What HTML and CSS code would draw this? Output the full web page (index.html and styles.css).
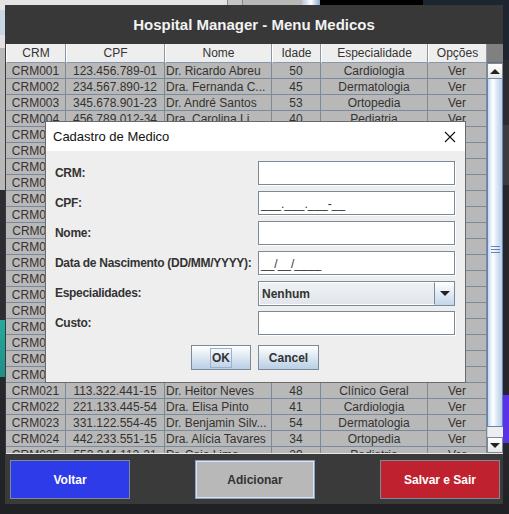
FILE: index.html
```html
<!DOCTYPE html>
<html>
<head>
<meta charset="utf-8">
<link rel="stylesheet" href="styles.css">
</head>
<body>
<div class="top-strip"><span class="ts a"></span><span class="ts b"></span><span class="ts c"></span><span class="ts d"></span><span class="ts e"></span><span class="ts f"></span></div>
<div class="left-strip"></div>
<div class="window">
  <div class="titlebar">Hospital Manager - Menu Medicos</div>
  <div class="scrollpane">
    <div class="viewport">
      <div class="grid head">
        <div class="hc">CRM</div><div class="hc">CPF</div><div class="hc">Nome</div><div class="hc">Idade</div><div class="hc">Especialidade</div><div class="hc">Opções</div>
      </div>
      <div class="grid body-rows">
        <div>CRM001</div><div>123.456.789-01</div><div class="l">Dr. Ricardo Abreu</div><div>50</div><div>Cardiologia</div><div>Ver</div>
        <div>CRM002</div><div>234.567.890-12</div><div class="l">Dra. Fernanda C...</div><div>45</div><div>Dermatologia</div><div>Ver</div>
        <div>CRM003</div><div>345.678.901-23</div><div class="l">Dr. André Santos</div><div>53</div><div>Ortopedia</div><div>Ver</div>
        <div>CRM004</div><div>456.789.012-34</div><div class="l">Dra. Carolina Li...</div><div>40</div><div>Pediatria</div><div>Ver</div>
        <div>CRM005</div><div>567.890.123-45</div><div class="l">Dr. Marcos Lima</div><div>47</div><div>Clínico Geral</div><div>Ver</div>
        <div>CRM006</div><div>678.901.234-56</div><div class="l">Dra. Juliana Rocha</div><div>39</div><div>Cardiologia</div><div>Ver</div>
        <div>CRM007</div><div>789.012.345-67</div><div class="l">Dr. Paulo Mendes</div><div>58</div><div>Dermatologia</div><div>Ver</div>
        <div>CRM008</div><div>890.123.456-78</div><div class="l">Dra. Beatriz Alves</div><div>36</div><div>Ortopedia</div><div>Ver</div>
        <div>CRM009</div><div>901.234.567-89</div><div class="l">Dr. Lucas Ferreira</div><div>44</div><div>Pediatria</div><div>Ver</div>
        <div>CRM010</div><div>012.345.678-90</div><div class="l">Dra. Camila Souza</div><div>42</div><div>Clínico Geral</div><div>Ver</div>
        <div>CRM011</div><div>111.222.333-44</div><div class="l">Dr. Rafael Costa</div><div>51</div><div>Cardiologia</div><div>Ver</div>
        <div>CRM012</div><div>222.333.444-55</div><div class="l">Dra. Larissa Melo</div><div>37</div><div>Dermatologia</div><div>Ver</div>
        <div>CRM013</div><div>333.444.555-66</div><div class="l">Dr. Gustavo Reis</div><div>49</div><div>Ortopedia</div><div>Ver</div>
        <div>CRM014</div><div>444.555.666-77</div><div class="l">Dra. Patrícia Dias</div><div>46</div><div>Pediatria</div><div>Ver</div>
        <div>CRM015</div><div>555.666.777-88</div><div class="l">Dr. Felipe Gomes</div><div>55</div><div>Clínico Geral</div><div>Ver</div>
        <div>CRM016</div><div>666.777.888-99</div><div class="l">Dra. Renata Lopes</div><div>38</div><div>Cardiologia</div><div>Ver</div>
        <div>CRM017</div><div>777.888.999-00</div><div class="l">Dr. Thiago Ramos</div><div>43</div><div>Dermatologia</div><div>Ver</div>
        <div>CRM018</div><div>888.999.000-11</div><div class="l">Dra. Vanessa Cruz</div><div>35</div><div>Ortopedia</div><div>Ver</div>
        <div>CRM019</div><div>999.000.111-22</div><div class="l">Dr. Bruno Teixeira</div><div>52</div><div>Pediatria</div><div>Ver</div>
        <div>CRM020</div><div>000.111.222-33</div><div class="l">Dra. Sofia Martins</div><div>33</div><div>Clínico Geral</div><div>Ver</div>
        <div>CRM021</div><div>113.322.441-15</div><div class="l">Dr. Heitor Neves</div><div>48</div><div>Clínico Geral</div><div>Ver</div>
        <div>CRM022</div><div>221.133.445-54</div><div class="l">Dra. Elisa Pinto</div><div>41</div><div>Cardiologia</div><div>Ver</div>
        <div>CRM023</div><div>331.122.554-45</div><div class="l">Dr. Benjamin Silv...</div><div>54</div><div>Dermatologia</div><div>Ver</div>
        <div>CRM024</div><div>442.233.551-15</div><div class="l">Dra. Alícia Tavares</div><div>34</div><div>Ortopedia</div><div>Ver</div>
        <div>CRM025</div><div>553.344.112-21</div><div class="l">Dr. Caio Lima</div><div>29</div><div>Pediatria</div><div>Ver</div>
      </div>
    </div>
    <div class="vscroll">
      <div class="corner"></div>
      <div class="sbtn"><span class="tri up"></span></div>
      <div class="thumb"><span class="grip"></span></div>
      <div class="track"></div>
      <div class="sbtn"><span class="tri down"></span></div>
    </div>
  </div>
  <div class="bottom-bar">
    <button class="big blue">Voltar</button>
    <button class="big gray">Adicionar</button>
    <button class="big red">Salvar e Sair</button>
  </div>

  <div class="dialog">
    <div class="dlg-title">
      <span>Cadastro de Medico</span>
      <svg class="close" width="12" height="12" viewBox="0 0 12 12"><path d="M1 1 L11 11 M11 1 L1 11" stroke="#111" stroke-width="1.1" fill="none"/></svg>
    </div>
    <div class="dlg-body">
      <div class="frow"><span class="lbl">CRM:</span><div class="field"></div></div>
      <div class="frow"><span class="lbl">CPF:</span><div class="field">___.___.___-__</div></div>
      <div class="frow"><span class="lbl">Nome:</span><div class="field"></div></div>
      <div class="frow"><span class="lbl">Data de Nascimento (DD/MM/YYYY):</span><div class="field">__/__/____</div></div>
      <div class="frow"><span class="lbl">Especialidades:</span><div class="combo"><span class="combo-val">Nenhum</span><span class="combo-btn"><span class="tri down"></span></span></div></div>
      <div class="frow"><span class="lbl">Custo:</span><div class="field"></div></div>
      <div class="btn-row">
        <button class="mbtn ok"><span class="focus">OK</span></button>
        <button class="mbtn cancel">Cancel</button>
      </div>
    </div>
  </div>
</div>
<div class="right-strip"></div>
</body>
</html>
```
FILE: styles.css
```css
html, body { margin: 0; padding: 0; }
body {
  width: 509px;
  height: 514px;
  overflow: hidden;
  background: #1f2125;
  display: grid;
  grid-template-columns: 5px 498px 6px;
  grid-template-rows: 5px 499px 10px;
  font-family: "Liberation Sans", Arial, sans-serif;
}
.top-strip { grid-column: 1 / 4; grid-row: 1; display: flex; }
.ts { display: block; height: 5px; }
.ts.a { width: 227px; background: #e4e4e4; }
.ts.b { width: 15px; background: #c4c4c4; border-left: 1px solid #888; box-sizing: border-box; }
.ts.c { width: 60px; background: #b8b8b8; border-left: 1px solid #7a8a99; box-sizing: border-box; }
.ts.d { width: 18px; background: linear-gradient(to right, #b5c6dc, #ffffff, #8ea4c8); }
.ts.e { width: 103px; background: #000; }
.ts.f { flex: 1; background: #1c2530; }

.left-strip {
  grid-column: 1; grid-row: 2 / 4;
  background: linear-gradient(to bottom,
    #e6e6e6 0px, #e6e6e6 5px,
    #c9d6e4 5px, #c9d6e4 30px,
    #e2e2e2 30px, #e2e2e2 43px,
    #b8b8b8 43px, #b8b8b8 185px,
    #2b2d31 185px, #2b2d31 315px,
    #27a99c 315px, #1f8f86 372px,
    #26282c 372px, #1f2125 509px);
}
.right-strip {
  grid-column: 3; grid-row: 2 / 4;
  background: linear-gradient(to bottom,
    #1c2530 0px, #1c2530 55px,
    #2a2c30 55px, #2a2c30 120px,
    #3a3c40 120px, #3a3c40 180px,
    #25272b 180px, #25272b 390px,
    #5a32e8 390px, #5a32e8 438px,
    #26282c 438px, #1f2125 509px);
}

.window {
  grid-column: 2; grid-row: 2;
  position: relative;
  background: #3a3a3a;
  display: flex;
  flex-direction: column;
  height: 499px;
}
.titlebar {
  height: 39px;
  flex: none;
  display: flex;
  align-items: center;
  justify-content: center;
  color: #f2f2f2;
  font-weight: bold;
  font-size: 15px;
  padding-bottom: 1px;
  box-sizing: border-box;
  background: #383838;
}

.scrollpane {
  margin-left: 1px;
  height: 410px;
  flex: none;
  display: flex;
  border-bottom: 1px solid #e8e8e8;
  box-sizing: border-box;
}
.viewport {
  width: 481px;
  height: 409px;
  overflow: hidden;
  background: #b8b8b8;
}
.grid {
  display: grid;
  grid-template-columns: 60px 99px 107px 49px 107px 59px;
}
.hc {
  height: 19px;
  background: #eeeeee;
  border-right: 1px solid #8a97a6;
  border-left: 1px solid #ffffff;
  border-bottom: 1px solid #8a97a6;
  box-sizing: border-box;
  font-size: 12px;
  color: #333;
  text-align: center;
  line-height: 19px;
}
.body-rows > div {
  height: 16px;
  box-sizing: border-box;
  border-right: 1px solid #7a8a99;
  border-bottom: 1px solid #7a8a99;
  background: #b8b8b8;
  color: #333;
  font-size: 12px;
  line-height: 16px;
  text-align: center;
  white-space: nowrap;
  overflow: hidden;
}
.body-rows > div.l { text-align: left; padding-left: 1px; }

.vscroll {
  width: 16px;
  display: flex;
  flex-direction: column;
  background: #eeeeee;
}
.corner { height: 19px; background: #808080; border-bottom: 1px solid #6d6d6d; box-sizing: border-box; }
.sbtn {
  height: 16px;
  background: linear-gradient(to bottom, #ffffff, #e6e6e6);
  border: 1px solid #7a8a99;
  box-sizing: border-box;
  display: flex;
  align-items: center;
  justify-content: center;
}
.tri { width: 0; height: 0; display: block; border-left: 5px solid transparent; border-right: 5px solid transparent; }
.tri.up { border-bottom: 5px solid #222; }
.tri.down { border-top: 5px solid #222; }
.thumb {
  height: 348px;
  box-sizing: border-box;
  border-left: 1px solid #6382bf;
  border-right: 1px solid #6382bf;
  border-bottom: 1px solid #6382bf;
  background: linear-gradient(to right, #c3d5ec 0%, #ffffff 35%, #d9e6f5 65%, #b8cde8 100%);
  display: flex;
  align-items: center;
  justify-content: center;
}
.grip {
  width: 9px;
  height: 5px;
  border-top: 1px solid #6382bf;
  border-bottom: 1px solid #6382bf;
  background: linear-gradient(to bottom, transparent 2px, #6382bf 2px, #6382bf 3px, transparent 3px);
  margin-top: -6px;
}
.track { height: 10px; background: #eeeeee; border-left: 1px solid #cfcfcf; }

.bottom-bar {
  flex: 1;
  display: flex;
  justify-content: space-between;
  align-items: flex-start;
  padding: 6px 3px 0 5px;
}
.big {
  width: 120px;
  height: 39px;
  border: 1px solid #7a8a99;
  font-family: "Liberation Sans", Arial, sans-serif;
  font-weight: bold;
  font-size: 12px;
  padding: 0;
}
.big.blue { background: #2e3be9; color: #fff; }
.big.red { background: #c0212e; color: #fff; }
.big.gray { background: #b8b8b8; color: #333; border-color: #8aa0bb; box-shadow: inset 0 0 0 1px #d6e4f3; }

.dialog {
  position: absolute;
  left: 40px;
  top: 116px;
  width: 421px;
  height: 262px;
  box-sizing: border-box;
  border: 1px solid #6a6a6a;
  background: #eeeeee;
  display: flex;
  flex-direction: column;
}
.dlg-title {
  height: 29px;
  background: #ffffff;
  display: flex;
  align-items: center;
  justify-content: space-between;
  padding: 0 9px 0 7px;
  font-size: 13px;
  color: #111;
}
.close { display: block; }
.dlg-body {
  padding: 10px 10px 0 9px;
  display: flex;
  flex-direction: column;
  gap: 6px;
}
.frow {
  display: flex;
  justify-content: space-between;
  align-items: center;
  height: 24px;
}
.lbl { font-weight: bold; font-size: 12px; color: #333; white-space: nowrap; letter-spacing: -0.3px; }
.field {
  width: 197px;
  height: 24px;
  box-sizing: border-box;
  background: #fff;
  border: 1px solid #7a8a99;
  box-shadow: 1px 1px 0 #ffffff;
  font-size: 12px;
  color: #333;
  padding: 5px 0 0 2px;
  line-height: 14px;
}
.combo {
  width: 197px;
  height: 25px;
  box-sizing: border-box;
  border: 1px solid #7a8a99;
  display: flex;
  background: #e8ebef;
}
.combo-val {
  flex: 1;
  font-weight: bold;
  font-size: 12px;
  color: #333;
  padding-left: 2px;
  line-height: 22px;
  border: 1px solid #fff;
  border-right: 1px solid #7a8a99;
  background: linear-gradient(to bottom, #eef1f4, #e2e6eb);
}
.combo-btn {
  width: 19px;
  background: linear-gradient(to bottom, #ffffff, #c4d6ea);
  display: flex;
  align-items: center;
  justify-content: center;
}
.btn-row {
  display: flex;
  justify-content: center;
  gap: 7px;
  margin-top: 4px;
  padding-left: 0;
}
.mbtn {
  height: 25px;
  border: 1px solid #7a8a99;
  background: linear-gradient(to bottom, #ffffff, #b8cfe5);
  font-family: "Liberation Sans", Arial, sans-serif;
  font-weight: bold;
  font-size: 12px;
  color: #333;
  padding: 0;
}
.mbtn.ok { width: 60px; }
.mbtn.cancel { width: 61px; }
.focus { border: 1px solid #9fb0cc; padding: 2px 1px; }
```
